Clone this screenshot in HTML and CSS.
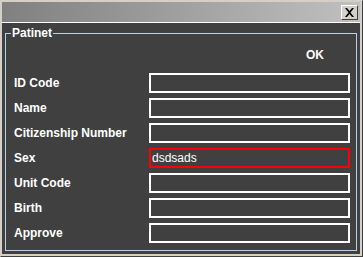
FILE: index.html
```html
<!DOCTYPE html>
<html lang="en">
<head>
  <meta charset="UTF-8" />
  <title>Patinet</title>
  <link rel="stylesheet" href="styles.css">
</head>
<body>
  <div class="window">
    <div class="titlebar">
      <button class="close" type="button">
        <svg width="11" height="9" viewBox="0 0 11 9">
          <path d="M1 0h2l2.5 3 2.5-3h2l-3.5 4.5 3.5 4.5h-2l-2.5-3-2.5 3h-2l3.5-4.5z" fill="#000"/>
        </svg>
      </button>
    </div>
    <div class="content">
      <fieldset class="group">
        <legend>Patinet</legend>
        <div class="actions">
          <span class="ok">OK</span>
        </div>
        <div class="row">
          <label for="idCode">ID Code</label>
          <input type="text" id="idCode" />
        </div>
        <div class="row">
          <label for="name">Name</label>
          <input type="text" id="name" />
        </div>
        <div class="row">
          <label for="citizen">Citizenship Number</label>
          <input type="text" id="citizen" />
        </div>
        <div class="row">
          <label for="sex">Sex</label>
          <input type="text" id="sex" class="error" value="dsdsads" />
        </div>
        <div class="row">
          <label for="unit">Unit Code</label>
          <input type="text" id="unit" />
        </div>
        <div class="row">
          <label for="birth">Birth</label>
          <input type="text" id="birth" />
        </div>
        <div class="row">
          <label for="approve">Approve</label>
          <input type="text" id="approve" />
        </div>
      </fieldset>
    </div>
  </div>
</body>
</html>
```

FILE: styles.css
```css
body {
  margin: 0;
  font-family: "Liberation Sans", Arial, sans-serif;
  background-color: #404040;
}

.window {
  width: 363px;
  height: 257px;
  box-sizing: border-box;
  border: 1px solid #d4d0c8;
  border-right-color: #404040;
  border-bottom-color: #404040;
  background-color: #d4d0c8;
  padding: 1px 2px 2px 1px;
  display: flex;
  flex-direction: column;
}

.titlebar {
  height: 20px;
  background: linear-gradient(to right, #808080, #c0c0c0);
  display: flex;
  justify-content: flex-end;
  align-items: center;
  padding-right: 2px;
}

.close {
  width: 17px;
  height: 15px;
  padding: 0;
  border: 1px solid;
  border-color: #ffffff #404040 #404040 #ffffff;
  background-color: #d4d0c8;
  display: flex;
  align-items: center;
  justify-content: center;
}

.content {
  flex: 1;
  background-color: #404040;
  border-top: 1px solid #ffffff;
  padding: 3px 3px 3px 3px;
  display: flex;
}

.group {
  flex: 1;
  margin: 0;
  padding: 0 6px 0 8px;
  border: 1px solid #b8cfe5;
  color: #ffffff;
}

.group legend {
  padding: 0 1px;
  margin-left: -3px;
  font-weight: bold;
  font-size: 12px;
}

.actions {
  display: flex;
  justify-content: flex-end;
  padding: 8px 26px 11px 0;
}

.ok {
  font-weight: bold;
  font-size: 12px;
}

.row {
  display: flex;
  align-items: center;
  justify-content: space-between;
  margin-bottom: 5px;
}

.row label {
  font-weight: bold;
  font-size: 12px;
}

.row input {
  width: 201px;
  height: 20px;
  box-sizing: border-box;
  border: 2px solid #ffffff;
  background-color: #404040;
  color: #ffffff;
  font-family: "Liberation Sans", Arial, sans-serif;
  font-size: 12px;
  padding: 0 1px;
  outline: none;
}

.row input.error {
  border-color: #ff0000;
}
```
